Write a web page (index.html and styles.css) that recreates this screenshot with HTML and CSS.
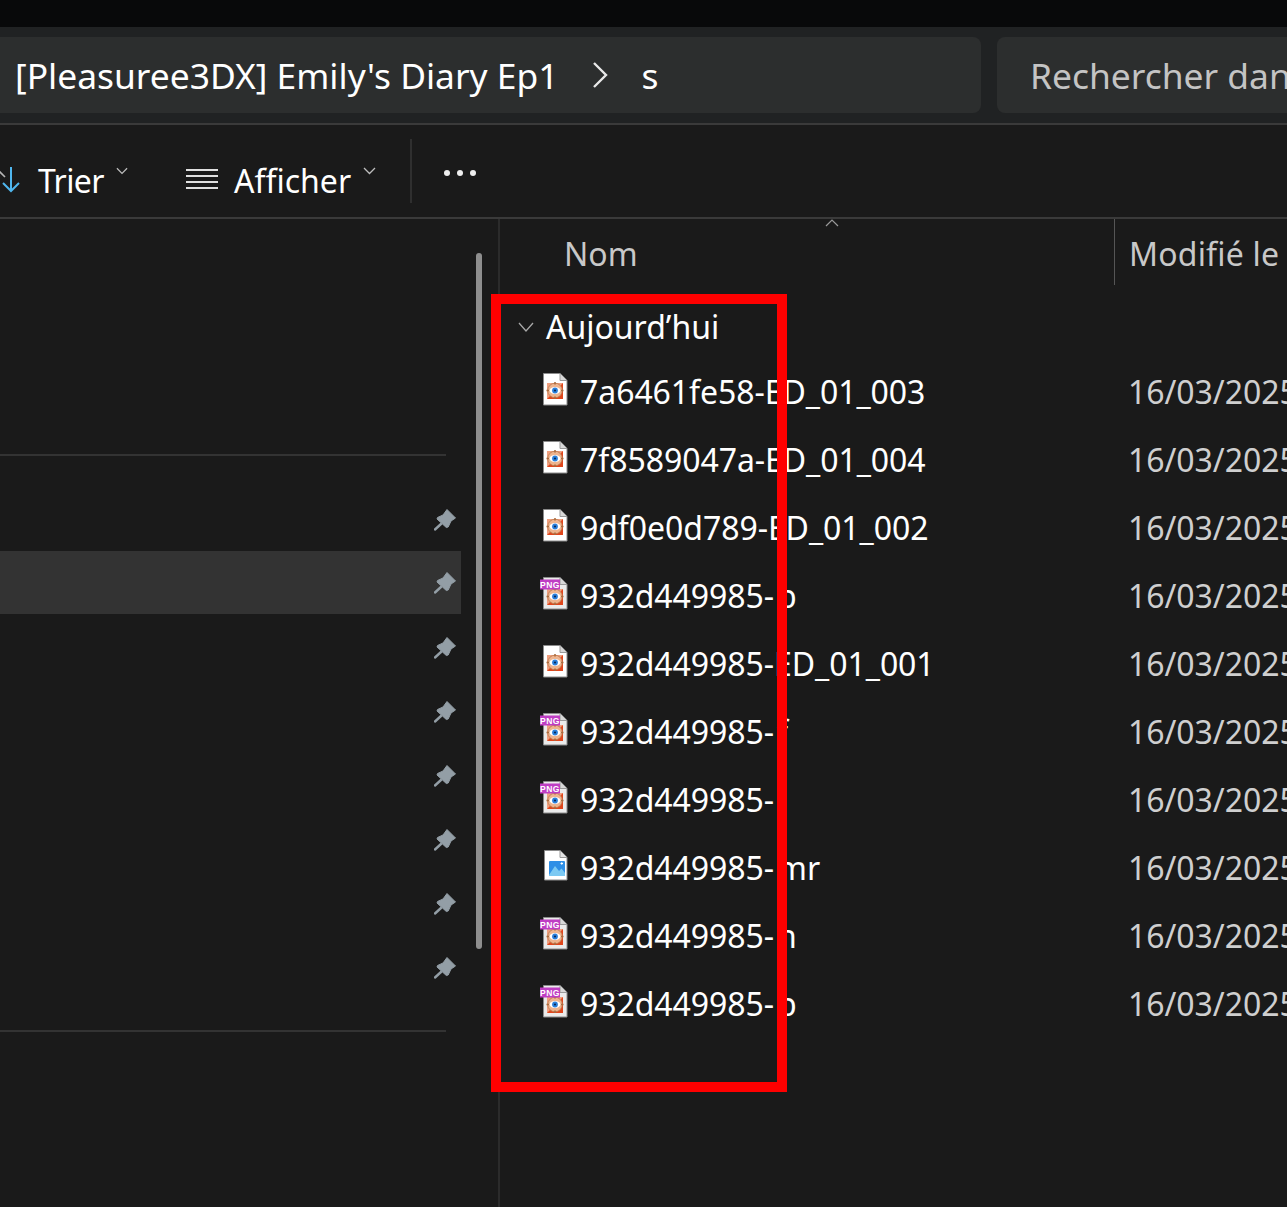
FILE: index.html
```html
<!DOCTYPE html>
<html lang="fr">
  <head>
    <meta charset="UTF-8" />
    <meta name="viewport" content="width=device-width, initial-scale=1.0" />
    <title>Explorateur</title>
    <link rel="stylesheet" href="styles.css">
  </head>
  <body>
    <svg class="defs" width="0" height="0">
      <defs>
        <symbol id="pin" viewBox="0 0 22 22">
          <path d="M13 .5 21.5 9 17 12 14.2 18 12.3 18.5 3 10 3.5 8.5 9 6Z" fill="#939ea6" stroke="#939ea6" stroke-linejoin="round"/>
          <path d="M7 15 1 20.5" stroke="#939ea6" stroke-width="2.4" stroke-linecap="round"/>
        </symbol>
        <symbol id="eye" viewBox="0 0 32 36">
          <rect x="7" y="11" width="16" height="16" fill="#e0461c"/>
          <path d="M7 11h16L7 27z" fill="#f0a080"/>
          <circle cx="15" cy="18.500" r="7.300" fill="#eeb48e" stroke="#b9794e" stroke-width=".8"/>
          <path d="M15 10v2.500M15 24.500V27M6.500 18.500H9M21 18.500h2.500" stroke="#a86a3c" stroke-width="1.500"/>
          <ellipse cx="15" cy="18.500" rx="5.400" ry="3.400" fill="#fff"/>
          <circle cx="15" cy="18.500" r="2.900" fill="#2a80dc"/>
          <circle cx="15" cy="18.500" r="1.100" fill="#0c2a55"/>
        </symbol>
        <symbol id="doc" viewBox="0 0 32 36">
          <path d="M3.500 1.500H20L27 8.500V33H3.500Z" fill="#fff" stroke="#8b8b8b"/>
          <path d="M20 1.500V8.500H27" fill="#d8d8d8" stroke="#9a9a9a"/>
          <use href="#eye" width="32" height="36"/>
        </symbol>
        <symbol id="doc-png" viewBox="0 0 32 36">
          <path d="M3.500 1.500H20L27 8.500V33H3.500Z" fill="#ebebeb" stroke="#8b8b8b"/>
          <path d="M20 1.500V8.500H27" fill="#d8d8d8" stroke="#9a9a9a"/>
          <use href="#eye" y="2" width="32" height="36"/>
          <rect x="0" y="3.500" width="20" height="10" fill="#bf3ec4"/>
          <text x="10" y="11.500" class="png-tag">PNG</text>
        </symbol>
        <symbol id="doc-link" viewBox="0 0 32 36">
          <path d="M4.500 2.500H20L27 9.500V32H4.500Z" fill="#fff" stroke="#8b8b8b"/>
          <path d="M20 2.500V9.500H27" fill="#e4e4e4" stroke="#9a9a9a"/>
          <rect x="9" y="13" width="16" height="15" rx="1" fill="#2f8fe6"/>
          <path d="M9 27 15 18 19 23 21.500 20.500 25 25V28H9Z" fill="#7cc9f2"/>
          <path d="M20.500 15.500h2.500M21.750 14.250v2.500" stroke="#fff"/>
        </symbol>
      </defs>
    </svg>

    <div class="top-strip"></div>

    <div class="address-row">
      <div class="address-bar">
        <span class="crumb">[Pleasuree3DX] Emily's Diary Ep1</span>
        <svg class="crumb-sep" width="16" height="28" viewBox="0 0 16 28">
          <path d="M2 2 14 14 2 26" fill="none" stroke="#e8e8e8" stroke-width="2.400"/>
        </svg>
        <span class="crumb">s</span>
      </div>
      <div class="search-box">Rechercher dans : s</div>
    </div>

    <div class="toolbar">
      <div class="tool tool-sort">
        <svg class="sort-icon" width="24" height="28" viewBox="0 0 24 28">
          <path d="M-4 2 5 11" fill="none" stroke="#b5b5b5" stroke-width="1.600"/>
          <path d="M11 1V25M3 17 11 25 19 17" fill="none" stroke="#4fb6ee" stroke-width="2"/>
        </svg>
        <span class="sort-label">Trier</span>
        <svg class="caret" width="12" height="8" viewBox="0 0 13 8">
          <path d="M1 1 6.500 6.500 12 1" fill="none" stroke="#bdbdbd" stroke-width="1.300"/>
        </svg>
      </div>
      <div class="tool tool-view">
        <svg class="view-icon" width="32" height="22" viewBox="0 0 32 22">
          <path d="M0 2H32M0 8H32M0 14H32M0 20H32" stroke="#e0e0e0" stroke-width="2"/>
        </svg>
        <span>Afficher</span>
        <svg class="caret" width="13" height="8" viewBox="0 0 13 8">
          <path d="M1 1 6.500 6.500 12 1" fill="none" stroke="#bdbdbd" stroke-width="1.300"/>
        </svg>
      </div>
      <div class="tool-sep"></div>
      <div class="more"><i></i><i></i><i></i></div>
    </div>

    <div class="main">
      <aside class="sidebar">
        <div class="scroll-thumb"></div>
        <div class="side-rule"></div>
        <ul class="pins">
          <li><svg class="pin"><use href="#pin"/></svg></li>
          <li class="selected"><svg class="pin"><use href="#pin"/></svg></li>
          <li><svg class="pin"><use href="#pin"/></svg></li>
          <li><svg class="pin"><use href="#pin"/></svg></li>
          <li><svg class="pin"><use href="#pin"/></svg></li>
          <li><svg class="pin"><use href="#pin"/></svg></li>
          <li><svg class="pin"><use href="#pin"/></svg></li>
          <li><svg class="pin"><use href="#pin"/></svg></li>
        </ul>
        <div class="side-rule"></div>
      </aside>

      <section class="files">
        <div class="col-head">
          <svg class="sort-caret" width="14" height="8" viewBox="0 0 14 8">
            <path d="M1 7 7 1 13 7" fill="none" stroke="#9a9a9a" stroke-width="1.200"/>
          </svg>
          <div class="col-name">Nom</div>
          <div class="col-date">Modifié le</div>
        </div>

        <div class="group">
          <svg width="16" height="10" viewBox="0 0 16 10">
            <path d="M1 1 8 9 15 1" fill="none" stroke="#a8a8a8" stroke-width="1.300"/>
          </svg>
          <span>Aujourd’hui</span>
        </div>

        <div class="row"><svg class="file-icon"><use href="#doc"/></svg><span>7a6461fe58-ED_01_003</span><span class="date">16/03/2025 10:12</span></div>
        <div class="row"><svg class="file-icon"><use href="#doc"/></svg><span>7f8589047a-ED_01_004</span><span class="date">16/03/2025 10:12</span></div>
        <div class="row"><svg class="file-icon"><use href="#doc"/></svg><span>9df0e0d789-ED_01_002</span><span class="date">16/03/2025 10:12</span></div>
        <div class="row"><svg class="file-icon"><use href="#doc-png"/></svg><span>932d449985-<span class="tail">b</span></span><span class="date">16/03/2025 10:12</span></div>
        <div class="row"><svg class="file-icon"><use href="#doc"/></svg><span>932d449985-ED_01_001</span><span class="date">16/03/2025 10:12</span></div>
        <div class="row"><svg class="file-icon"><use href="#doc-png"/></svg><span>932d449985-<span class="tail">f</span></span><span class="date">16/03/2025 10:12</span></div>
        <div class="row"><svg class="file-icon"><use href="#doc-png"/></svg><span>932d449985-<span class="tail">i</span></span><span class="date">16/03/2025 10:12</span></div>
        <div class="row"><svg class="file-icon"><use href="#doc-link"/></svg><span>932d449985-<span class="tail">mr</span></span><span class="date">16/03/2025 10:12</span></div>
        <div class="row"><svg class="file-icon"><use href="#doc-png"/></svg><span>932d449985-<span class="tail">h</span></span><span class="date">16/03/2025 10:12</span></div>
        <div class="row"><svg class="file-icon"><use href="#doc-png"/></svg><span>932d449985-<span class="tail">b</span></span><span class="date">16/03/2025 10:12</span></div>
      </section>
    </div>

    <div class="red-box"></div>
  </body>
</html>
```

FILE: styles.css
```css
html,
body {
  margin: 0;
  height: 1207px;
  overflow: hidden;
}

body {
  position: relative;
  background-color: #1a1a1a;
  color: #fff;
  font-family: "Noto Sans", "Open Sans", sans-serif;
  font-size: 32px;
  white-space: nowrap;
}

.defs {
  position: absolute;
}

.png-tag {
  font-family: "Liberation Sans", sans-serif;
  font-size: 8.500px;
  font-weight: 700;
  letter-spacing: .5px;
  fill: #fff;
  text-anchor: middle;
}

.top-strip {
  height: 27px;
  background-color: #08090a;
}

.address-row {
  display: flex;
  gap: 16px;
  height: 76px;
  padding: 10px 0;
  background-color: #202223;
  font-size: 35.400px;
}

.address-bar {
  display: flex;
  align-items: center;
  flex: 0 0 981px;
  box-sizing: border-box;
  padding-left: 15px;
  background-color: #2c2e2e;
  border-radius: 0 8px 8px 0;
}

.crumb-sep {
  margin: 0 34px 0 33px;
}

.search-box {
  display: flex;
  align-items: center;
  flex: 1;
  padding-left: 33px;
  background-color: #2c2e2e;
  border-radius: 8px 0 0 8px;
  color: #c4c4c4;
  overflow: hidden;
}

.toolbar {
  display: flex;
  align-items: center;
  height: 92px;
  border-top: 2px solid #3a3a3a;
  border-bottom: 2px solid #3a3a3a;
}

.tool {
  display: flex;
  align-items: center;
  padding-top: 18px;
}

.tool .caret {
  margin: -18px 0 0 12px;
}

.tool-sort {
  width: 186px;
}

.sort-icon {
  margin-right: 14px;
}

.sort-label {
  letter-spacing: -.6px;
}

.view-icon {
  margin-right: 16px;
  margin-top: -3px;
}

.tool-view {
  width: 225px;
}

.tool-sep {
  width: 2px;
  height: 64px;
  background-color: #2f2f2f;
  margin: -1px 0 0 -1px;
}

.more {
  display: flex;
  gap: 7px;
  margin: 4px 0 0 32px;
}

.more i {
  display: block;
  width: 6px;
  height: 6px;
  border-radius: 50%;
  background-color: #eee;
}

.main {
  display: flex;
  height: 988px;
}

.sidebar {
  position: relative;
  box-sizing: border-box;
  width: 500px;
  padding-top: 235px;
  border-right: 2px solid #2b2b2b;
}

.scroll-thumb {
  position: absolute;
  left: 476px;
  top: 34px;
  width: 6px;
  height: 696px;
  border-radius: 3px;
  background-color: #8e8e8e;
}

.side-rule {
  width: 446px;
  height: 2px;
  background-color: #333;
}

.pins {
  list-style: none;
  width: 461px;
  margin: 0;
  padding: 31px 0;
}

.pins li {
  display: flex;
  align-items: center;
  justify-content: flex-end;
  box-sizing: border-box;
  height: 64px;
  padding: 1px 5px 0 0;
}

.pins .selected {
  background-color: #333;
  border-bottom: 1px solid #1a1a1a;
}

.pin {
  width: 22px;
  height: 22px;
}

.files {
  flex: 1;
  min-width: 0;
}

.col-head {
  position: relative;
  display: flex;
  height: 66px;
  color: #c8c8c8;
  line-height: 70px;
}

.sort-caret {
  position: absolute;
  left: 325px;
  top: 0;
}

.col-name {
  width: 615px;
  box-sizing: border-box;
  padding-left: 64px;
  border-right: 1px solid #555;
}

.col-date {
  padding-left: 14px;
  letter-spacing: .2px;
}

.group {
  display: flex;
  align-items: center;
  gap: 12px;
  box-sizing: border-box;
  height: 73px;
  padding: 10px 0 0 18px;
}

.row {
  display: grid;
  grid-template-columns: 80px 549px 1fr;
  align-items: center;
  height: 68px;
  line-height: 66px;
  letter-spacing: -.06px;
}

.file-icon {
  width: 32px;
  height: 36px;
  margin: -4px 0 0 40px;
}

.tail {
  margin-left: 3px;
}

.date {
  color: #cfcfcf;
  margin-left: -1px;
}

.red-box {
  position: absolute;
  left: 491px;
  top: 294px;
  width: 276px;
  height: 778px;
  border: 10px solid #f00;
}
```
